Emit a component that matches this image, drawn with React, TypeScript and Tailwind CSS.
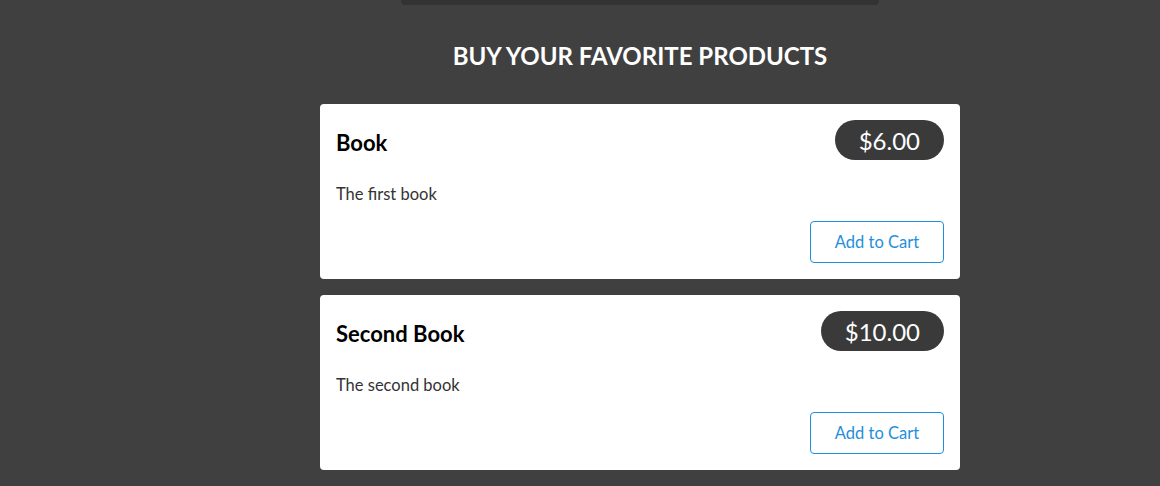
import React from "react";

const products = [
  { title: "Book", price: "$6.00", desc: "The first book" },
  { title: "Second Book", price: "$10.00", desc: "The second book" },
];

export default function App() {
  return (
    <div
      className="min-h-[486px] w-full bg-[#404040] pl-[320px]"
      style={{ fontFamily: "Lato, 'Open Sans', sans-serif" }}
    >
      <div className="flex w-[640px] flex-col">
        <div className="mx-auto h-[5px] w-[478px] rounded-b-[4px] bg-[#333333]" />
        <h1 className="mt-[36px] text-center text-[24px] font-bold leading-[30px] text-white">
          BUY YOUR FAVORITE PRODUCTS
        </h1>
        <div className="mt-[33px] flex flex-col gap-[16px]">
          {products.map((p) => (
            <div key={p.title} className="flex h-[175px] flex-col rounded-[4px] bg-white p-[16px]">
              <div className="flex items-center justify-between">
                <div className="mt-[5px] text-[22px] font-bold leading-[28px] text-black">{p.title}</div>
                <div className="flex h-[40px] items-center rounded-full bg-[#3a3a3a] px-[24px] pt-[2px] text-[24px] leading-none text-white">
                  {p.price}
                </div>
              </div>
              <div className="mt-[22px] text-[16.5px] leading-[24px] text-[#333333]">{p.desc}</div>
              <div className="mt-auto flex justify-end">
                <button className="h-[42px] w-[134px] rounded-[4px] border border-[#1e8fdc] bg-white text-[16.5px] text-[#1e8fdc]">
                  Add to Cart
                </button>
              </div>
            </div>
          ))}
        </div>
      </div>
    </div>
  );
}
